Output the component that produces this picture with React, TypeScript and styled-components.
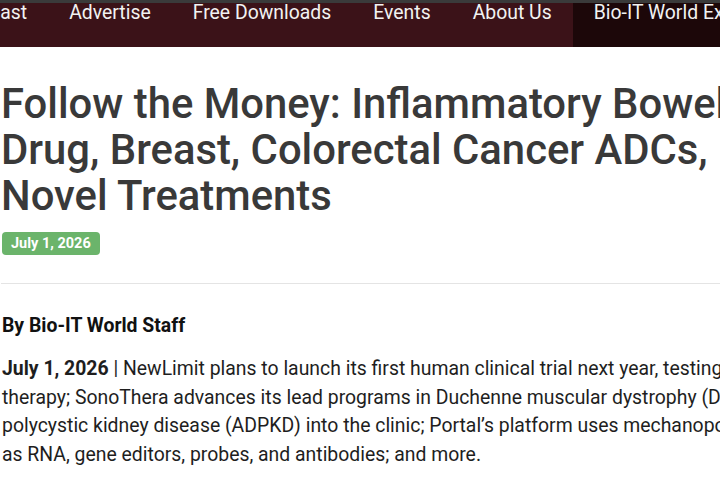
import React from "react";
import styled, { createGlobalStyle } from "styled-components";

const GlobalStyle = createGlobalStyle`
  html, body {
    margin: 0;
    padding: 0;
    background: #ffffff;
    overflow: hidden;
  }
  body {
    font-family: Roboto, "Liberation Sans", Arial, sans-serif;
  }
`;

const Page = styled.div`
  width: 720px;
  height: 480px;
  overflow: hidden;
  border-top: 3px solid #3a3a3a;
  box-sizing: border-box;
`;

const NavBar = styled.nav`
  height: 44px;
  background: #3b1218;
  overflow: hidden;
`;

const NavList = styled.ul`
  display: flex;
  list-style: none;
  margin: 0 0 0 -65px;
  padding: 0;
  height: 100%;
  white-space: nowrap;
`;

const NavItem = styled.li<{ $highlight?: boolean }>`
  padding: 0 21px;
  height: 100%;
  font-size: 19.4px;
  line-height: 20px;
  color: #f2f2f2;
  background: ${(p) => (p.$highlight ? "#1c0709" : "transparent")};
  flex: ${(p) => (p.$highlight ? "1 0 auto" : "0 0 auto")};
`;

const Article = styled.article`
  width: 960px;
  padding: 0 0 0 1px;
`;

const Title = styled.h1`
  margin: 34px 0 0;
  font-size: 41.8px;
  line-height: 46px;
  font-weight: 500;
  color: #393939;
`;

const DateBadge = styled.span`
  display: inline-block;
  margin-top: 13px;
  margin-left: 1px;
  padding: 0 9px;
  height: 23px;
  line-height: 23px;
  border-radius: 4px;
  background: #6bb46b;
  color: #ffffff;
  font-size: 14.5px;
  font-weight: 700;
`;

const Divider = styled.hr`
  margin: 28px 0 0;
  border: 0;
  height: 1px;
  background: #e4e4e4;
  width: 719px;
`;

const Byline = styled.p`
  margin: 29px 0 0 1px;
  font-size: 19.4px;
  line-height: 26px;
  font-weight: 700;
  color: #111111;
`;

const Body = styled.p`
  margin: 16px 0 0 1px;
  font-size: 19.4px;
  line-height: 28.5px;
  color: #1e1e1e;
  white-space: nowrap;
`;

const Strong = styled.strong`
  font-weight: 700;
`;

const navItems = ["Podcast", "Advertise", "Free Downloads", "Events", "About Us"];

export default function App() {
  return (
    <>
      <GlobalStyle />
      <Page>
        <NavBar>
          <NavList>
            {navItems.map((item) => (
              <NavItem key={item}>{item}</NavItem>
            ))}
            <NavItem $highlight>Bio-IT World Expo</NavItem>
          </NavList>
        </NavBar>
        <Article>
          <Title>
            Follow the Money: Inflammatory Bowel Disease Drug, Breast, Colorectal Cancer ADCs,
            Multiple Novel Treatments
          </Title>
          <DateBadge>July 1, 2026</DateBadge>
          <Divider />
          <Byline>By Bio-IT World Staff</Byline>
          <Body>
            <Strong>July 1, 2026</Strong> | NewLimit plans to launch its first human clinical
            trial next year, testing its hepatocyte reprogramming
            <br />
            therapy; SonoThera advances its lead programs in Duchenne muscular dystrophy (DMD) and
            autosomal dominant
            <br />
            polycystic kidney disease (ADPKD) into the clinic; Portal’s platform uses
            mechanoporation to deliver cargo such
            <br />
            as RNA, gene editors, probes, and antibodies; and more.
          </Body>
        </Article>
      </Page>
    </>
  );
}
